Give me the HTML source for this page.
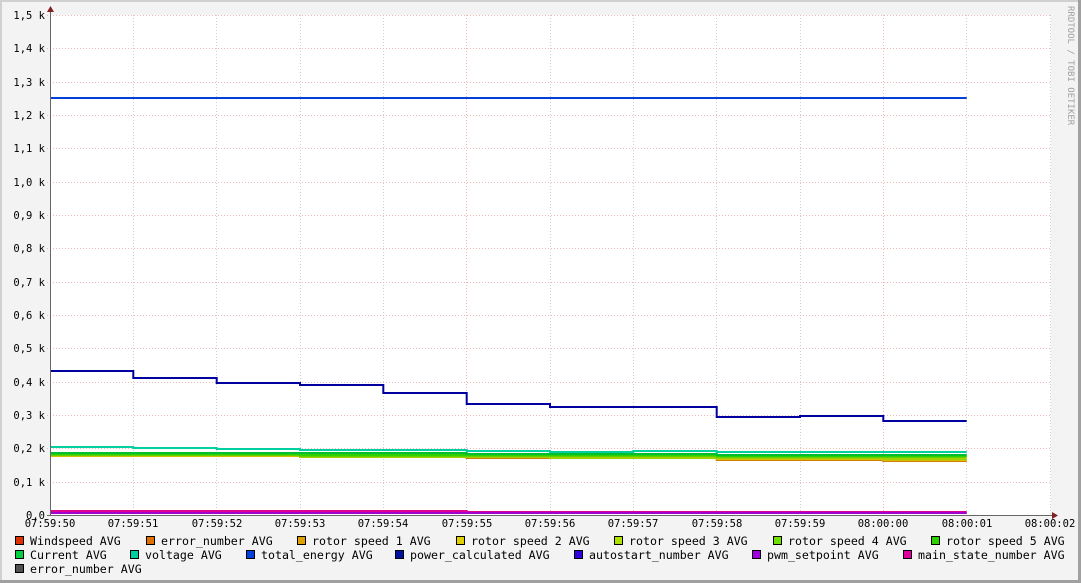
<!DOCTYPE html>
<html><head><meta charset="utf-8"><style>
html,body{margin:0;padding:0;width:1081px;height:583px;overflow:hidden;background:#f3f3f3}
svg{display:block}
text{font-family:"DejaVu Sans Mono","Liberation Mono",monospace}
</style></head><body>
<svg width="1081" height="583" viewBox="0 0 1081 583" xmlns="http://www.w3.org/2000/svg">
<rect x="0" y="0" width="1081" height="583" fill="#f3f3f3"/>
<rect x="0" y="0" width="1081" height="2" fill="#d0d0d0"/>
<rect x="0" y="0" width="2" height="583" fill="#d0d0d0"/>
<rect x="1078" y="0" width="3" height="583" fill="#a0a0a0"/>
<rect x="0" y="580" width="1081" height="3" fill="#a0a0a0"/>
<rect x="50" y="15" width="1001" height="500" fill="#fff"/>
<g stroke="#d0d0d0" stroke-width="1" stroke-dasharray="1,2">
<path d="M133.5 15V515M216.5 15V515M300.5 15V515M383.5 15V515M550.5 15V515M633.5 15V515M716.5 15V515M800.5 15V515M966.5 15V515M1050.5 15V515"/>
</g>
<g stroke="#ecb8b8" stroke-width="1" stroke-dasharray="1,2">
<path d="M466.5 15V515M883.5 15V515"/>
<path d="M47 15.5H1051M47 48.5H1051M47 82.5H1051M47 115.5H1051M47 148.5H1051M47 182.5H1051M47 215.5H1051M47 248.5H1051M47 282.5H1051M47 315.5H1051M47 348.5H1051M47 382.5H1051M47 415.5H1051M47 448.5H1051M47 482.5H1051"/>
</g>
<g fill="none" stroke-width="2">
<path d="M50 98H966.7" stroke="#0040d8"/>
<path d="M50 371H133.3V378H216.7V383H300V385H383.3V393H466.7V404H550V407H716.7V417H800V416H883.3V421H966.7" stroke="#0000a0"/>
<path d="M50 456H300V457H466.7V458H550V458H633.3V458H716.7V460H883.3V461H966.7" stroke="#d08000"/>
<path d="M50 456H300V457H466.7V457H550V456H633.3V457H716.7V459H883.3V460H966.7" stroke="#d0c000"/>
<path d="M50 455H300V457H466.7V457H550V458H633.3V458H716.7V458H883.3V459H966.7" stroke="#a0d000"/>
<path d="M50 455H300V456H466.7V456H550V456H716.7V457H800V457H966.7" stroke="#60d000"/>
<path d="M50 454H300V455H466.7V455H550V455H716.7V456H966.7" stroke="#30d000"/>
<path d="M50 453H466.7V454H550V454H716.7V455H966.7" stroke="#00c030"/>
<path d="M50 447H133.3V448H216.7V449H300V450H466.7V451H550V452H633.3V451H716.7V452H966.7" stroke="#00d0a0"/>
<path d="M50 511H466.7V512H966.7" stroke="#e00090"/>
<path d="M50 513H966.7" stroke="#a000d0"/>
</g>
<path d="M50.5 10V515M47 515.5H1055" stroke="#666" stroke-width="1"/>
<path d="M47 12L50.5 6L54 12Z" fill="#802020"/>
<path d="M1052 512L1058 515.5L1052 519Z" fill="#802020"/>
<g font-size="10.5" fill="#000" text-anchor="end">
<text x="45" y="19">1,5 k</text><text x="45" y="52">1,4 k</text><text x="45" y="86">1,3 k</text><text x="45" y="119">1,2 k</text><text x="45" y="152">1,1 k</text><text x="45" y="186">1,0 k</text><text x="45" y="219">0,9 k</text><text x="45" y="252">0,8 k</text><text x="45" y="286">0,7 k</text><text x="45" y="319">0,6 k</text><text x="45" y="352">0,5 k</text><text x="45" y="386">0,4 k</text><text x="45" y="419">0,3 k</text><text x="45" y="452">0,2 k</text><text x="45" y="486">0,1 k</text><text x="45" y="519">0,0</text>
</g>
<g font-size="10.5" fill="#000" text-anchor="middle">
<text x="50" y="527">07:59:50</text><text x="133" y="527">07:59:51</text><text x="217" y="527">07:59:52</text><text x="300" y="527">07:59:53</text><text x="383" y="527">07:59:54</text><text x="467" y="527">07:59:55</text><text x="550" y="527">07:59:56</text><text x="633" y="527">07:59:57</text><text x="717" y="527">07:59:58</text><text x="800" y="527">07:59:59</text><text x="883" y="527">08:00:00</text><text x="967" y="527">08:00:01</text><text x="1050" y="527">08:00:02</text>
</g>
<text x="1068" y="6" font-size="9" fill="#a0a0a0" transform="rotate(90 1068 6)">RRDTOOL / TOBI OETIKER</text>
<g stroke="#000" stroke-width="1">
<rect x="15.5" y="536.5" width="8" height="8" fill="#e03000"/>
<rect x="146.5" y="536.5" width="8" height="8" fill="#e07000"/>
<rect x="297.5" y="536.5" width="8" height="8" fill="#e0a000"/>
<rect x="456.5" y="536.5" width="8" height="8" fill="#e0d000"/>
<rect x="614.5" y="536.5" width="8" height="8" fill="#b0e000"/>
<rect x="773.5" y="536.5" width="8" height="8" fill="#70e000"/>
<rect x="931.5" y="536.5" width="8" height="8" fill="#30d000"/>
<rect x="15.5" y="550.5" width="8" height="8" fill="#00d040"/>
<rect x="130.5" y="550.5" width="8" height="8" fill="#00d0a0"/>
<rect x="246.5" y="550.5" width="8" height="8" fill="#0040e0"/>
<rect x="395.5" y="550.5" width="8" height="8" fill="#0010a0"/>
<rect x="574.5" y="550.5" width="8" height="8" fill="#3000e0"/>
<rect x="752.5" y="550.5" width="8" height="8" fill="#a000e0"/>
<rect x="903.5" y="550.5" width="8" height="8" fill="#e000a0"/>
<rect x="15.5" y="564.5" width="8" height="8" fill="#505050"/>
</g>
<g font-size="11.6" fill="#000">
<text x="30" y="545">Windspeed AVG</text>
<text x="161" y="545">error_number AVG</text>
<text x="312" y="545">rotor speed 1 AVG</text>
<text x="471" y="545">rotor speed 2 AVG</text>
<text x="629" y="545">rotor speed 3 AVG</text>
<text x="788" y="545">rotor speed 4 AVG</text>
<text x="946" y="545">rotor speed 5 AVG</text>
<text x="30" y="559">Current AVG</text>
<text x="145" y="559">voltage AVG</text>
<text x="261" y="559">total_energy AVG</text>
<text x="410" y="559">power_calculated AVG</text>
<text x="589" y="559">autostart_number AVG</text>
<text x="767" y="559">pwm_setpoint AVG</text>
<text x="918" y="559">main_state_number AVG</text>
<text x="30" y="573">error_number AVG</text>
</g>
</svg>
</body></html>
